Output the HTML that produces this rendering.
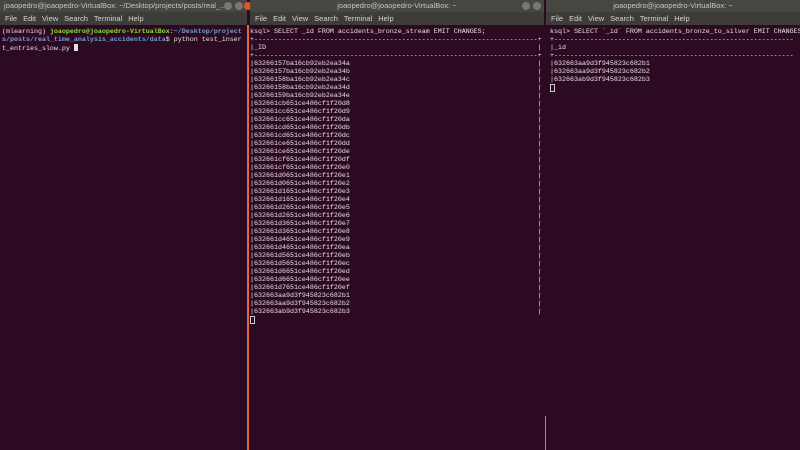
<!DOCTYPE html>
<html><head><meta charset="utf-8"><style>
*{margin:0;padding:0;box-sizing:border-box}
body{width:800px;height:450px;overflow:hidden;background:#2c0a22;position:relative;font-family:"Liberation Sans",sans-serif}
.pane{position:absolute;top:0;height:450px;background:#2c0a22;overflow:hidden}
.tb{height:12px;background:#474641;color:#c8c6c0;font-size:7.5px;line-height:12px;white-space:nowrap}
.mb{height:13px;background:#3d3c38;color:#d6d4cf;font-size:7.5px;line-height:13px;padding-left:5px;white-space:nowrap}
.mb span{margin-right:6px}
pre{font-family:"Liberation Mono",monospace;font-size:6.67px;line-height:8px;color:#e8e3e6;padding-top:3px;white-space:pre}
.g{color:#8ae234;font-weight:bold}.b{color:#729fcf;font-weight:bold}
.cur{display:inline-block;width:4px;height:7px;background:#e4dfe2;vertical-align:-1px}
.curo{display:inline-block;width:5px;height:8px;border:1px solid #ccc;vertical-align:-1px}
.btn{display:inline-block;width:8px;height:8px;border-radius:50%;background:#77766f;position:absolute;top:2px}
</style></head><body>
<div class="pane" style="left:0;width:247px">
<div class="tb" style="padding-left:4px">joaopedro@joaopedro-VirtualBox: ~/Desktop/projects/posts/real_...<span class="btn" style="left:224px"></span><span class="btn" style="left:235px;background:#77766f"></span></div>
<div class="mb"><span>File</span><span>Edit</span><span>View</span><span>Search</span><span>Terminal</span><span>Help</span></div>
<pre style="padding-left:2px">(mlearning) <span class="g">joaopedro@joaopedro-VirtualBox</span>:<span class="b">~/Desktop/project</span>
<span class="b">s/posts/real_time_analysis_accidents/data</span>$ python test_inser
t_entries_slow.py <span class="cur"></span></pre>
</div>
<div style="position:absolute;left:245px;top:0;width:5px;height:12px;"><span class="btn" style="left:-1px;background:#e0552b;top:2px"></span></div>
<div style="position:absolute;left:247px;top:25px;width:2px;height:425px;background:#e0693a"></div>
<div class="pane" style="left:250px;width:294px">
<div class="tb" style="text-align:center">joaopedro@joaopedro-VirtualBox: ~<span class="btn" style="left:272px"></span><span class="btn" style="left:283px"></span></div>
<div class="mb"><span>File</span><span>Edit</span><span>View</span><span>Search</span><span>Terminal</span><span>Help</span></div>
<pre>ksql&gt; SELECT _id FROM accidents_bronze_stream EMIT CHANGES;
+-----------------------------------------------------------------------+
|_ID                                                                    |
+-----------------------------------------------------------------------+
|63266157ba16cb92eb2ea34a                                               |
|63266157ba16cb92eb2ea34b                                               |
|63266158ba16cb92eb2ea34c                                               |
|63266158ba16cb92eb2ea34d                                               |
|63266159ba16cb92eb2ea34e                                               |
|632661cb651ce486cf1f20d8                                               |
|632661cc651ce486cf1f20d9                                               |
|632661cc651ce486cf1f20da                                               |
|632661cd651ce486cf1f20db                                               |
|632661cd651ce486cf1f20dc                                               |
|632661ce651ce486cf1f20dd                                               |
|632661ce651ce486cf1f20de                                               |
|632661cf651ce486cf1f20df                                               |
|632661cf651ce486cf1f20e0                                               |
|632661d0651ce486cf1f20e1                                               |
|632661d0651ce486cf1f20e2                                               |
|632661d1651ce486cf1f20e3                                               |
|632661d1651ce486cf1f20e4                                               |
|632661d2651ce486cf1f20e5                                               |
|632661d2651ce486cf1f20e6                                               |
|632661d3651ce486cf1f20e7                                               |
|632661d3651ce486cf1f20e8                                               |
|632661d4651ce486cf1f20e9                                               |
|632661d4651ce486cf1f20ea                                               |
|632661d5651ce486cf1f20eb                                               |
|632661d5651ce486cf1f20ec                                               |
|632661d6651ce486cf1f20ed                                               |
|632661d6651ce486cf1f20ee                                               |
|632661d7651ce486cf1f20ef                                               |
|632663aa9d3f945823c682b1                                               |
|632663aa9d3f945823c682b2                                               |
|632663ab9d3f945823c682b3                                               |
<span class="curo"></span></pre>
</div>
<div style="position:absolute;left:545px;top:416px;width:2px;height:34px;background:#9a8d96"></div>
<div class="pane" style="left:546px;width:254px">
<div class="tb" style="text-align:center">joaopedro@joaopedro-VirtualBox: ~</div>
<div class="mb"><span>File</span><span>Edit</span><span>View</span><span>Search</span><span>Terminal</span><span>Help</span></div>
<pre style="padding-left:4px">ksql&gt; SELECT `_id` FROM accidents_bronze_to_silver EMIT CHANGES;
+------------------------------------------------------------
|_id
+------------------------------------------------------------
|632663aa9d3f945823c682b1
|632663aa9d3f945823c682b2
|632663ab9d3f945823c682b3
<span class="curo"></span></pre>
</div>
</body></html>
